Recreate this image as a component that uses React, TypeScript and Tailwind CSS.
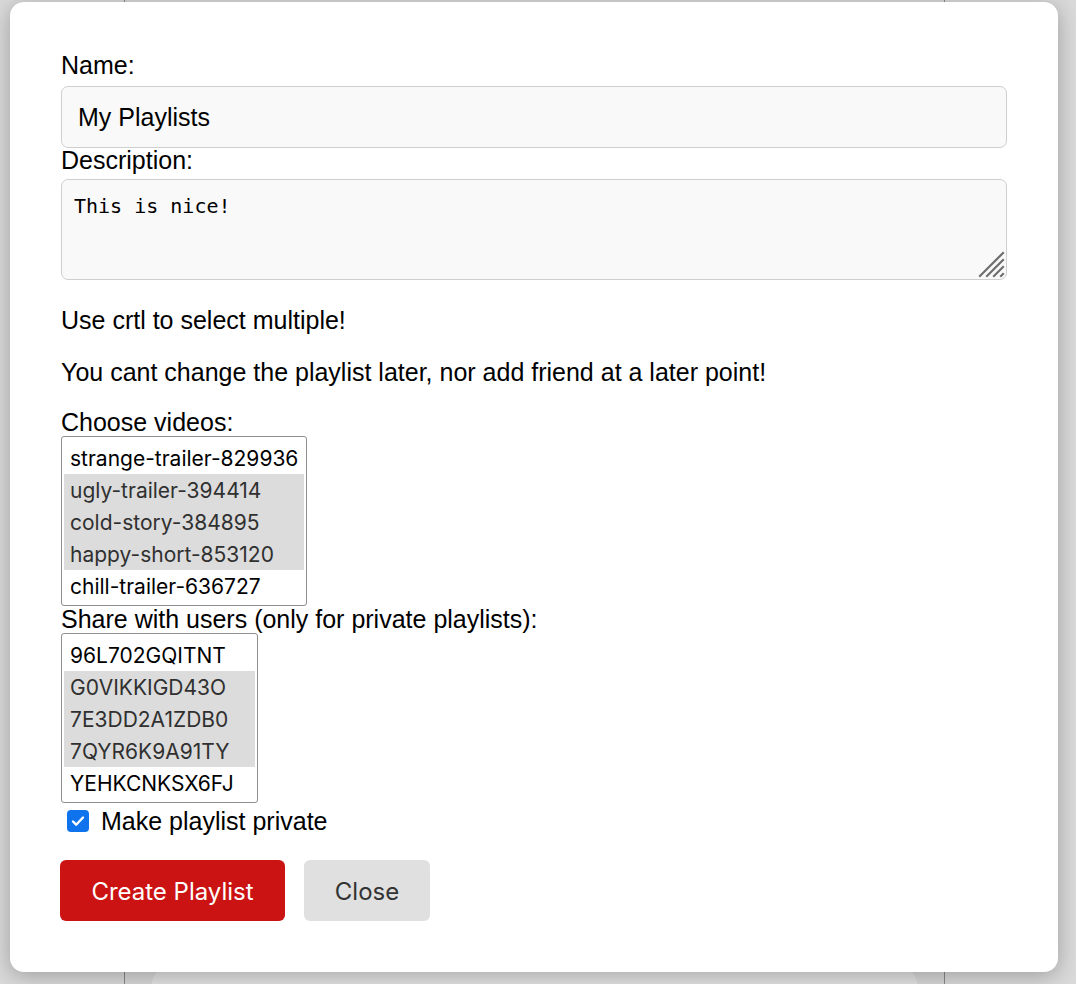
import { useState } from "react";

const videos = [
    "strange-trailer-829936",
    "ugly-trailer-394414",
    "cold-story-384895",
    "happy-short-853120",
    "chill-trailer-636727",
];

const users = ["96L702GQITNT", "G0VIKKIGD43O", "7E3DD2A1ZDB0", "7QYR6K9A91TY", "YEHKCNKSX6FJ"];

const ListBox = ({ items, selected, width }: { items: string[]; selected: number[]; width: string }) => {
    return (
        <div className={`${width} border border-[#8f8f8f] rounded-[3px] bg-white px-[2px] pt-[5px] pb-[3px]`}>
            {items.map((item, i) => (
                <div
                    key={item}
                    className={`h-[32px] flex items-center pl-[6px] pt-[1px] text-[21px] font-['Inter',sans-serif] whitespace-nowrap ${
                        selected.includes(i) ? "bg-[#dcdcdc] text-[#303030]" : "text-black"
                    }`}
                >
                    {item}
                </div>
            ))}
        </div>
    );
};

const App = () => {
    const [isPrivate, setIsPrivate] = useState(true);

    return (
        <div className="relative h-[984px] w-[1076px] overflow-hidden bg-[#dadada] font-['Liberation_Sans',Arial,sans-serif]">
            {/* page behind the overlay */}
            <div className="ml-[124px] w-[821px] h-full border-x border-[#8a8a8a] bg-[#d8d8d8] pt-[958px]">
                <div className="mx-[26px] h-[60px] rounded-t-[32px] bg-[#e3e3e3]" />
            </div>

            {/* modal */}
            <div className="absolute left-[10px] top-[2px] w-[1048px] h-[970px] bg-white rounded-[14px] shadow-[0_4px_22px_rgba(0,0,0,0.28)] pt-[49px] px-[51px]">
                <label className="block text-[25px] leading-[28px] text-black">Name:</label>
                <input
                    className="block mt-[7px] w-[946px] h-[62px] rounded-[7px] border border-[#cfcfcf] bg-[#f9f9f9] px-[16px] text-[25px] text-black outline-none font-['Liberation_Sans',Arial,sans-serif]"
                    defaultValue="My Playlists"
                />
                <label className="block -mt-[2px] text-[25px] leading-[28px] text-black">Description:</label>
                <div className="relative mt-[5px] w-[946px]">
                    <textarea
                        className="block w-full h-[101px] resize-none rounded-[7px] border border-[#cfcfcf] bg-[#f9f9f9] px-[12px] py-[14px] text-[20px] leading-[24px] text-black outline-none font-['DejaVu_Sans_Mono',monospace]"
                        defaultValue="This is nice!"
                    />
                    {/* resize grip */}
                    <svg className="absolute right-[2px] bottom-[2px]" width="27" height="27" viewBox="0 0 27 27">
                        <g stroke="#6e6e6e" strokeWidth="2.2" strokeLinecap="square">
                            <line x1="2" y1="25" x2="25" y2="2" />
                            <line x1="9" y1="25" x2="25" y2="9" />
                            <line x1="16" y1="25" x2="25" y2="16" />
                            <line x1="23" y1="25" x2="25" y2="23" />
                        </g>
                    </svg>
                </div>
                <p className="mt-[26px] text-[25px] leading-[28px] text-black">Use crtl to select multiple!</p>
                <p className="mt-[24px] text-[25px] leading-[28px] text-black">
                    You cant change the playlist later, nor add friend at a later point!
                </p>
                <label className="block mt-[22px] text-[25px] leading-[28px] text-black">Choose videos:</label>
                <ListBox items={videos} selected={[1, 2, 3]} width="w-[246px]" />
                <label className="block -mt-[1px] text-[25px] leading-[28px] text-black">
                    Share with users (only for private playlists):
                </label>
                <ListBox items={users} selected={[1, 2, 3]} width="w-[197px]" />
                <label className="flex items-center mt-[4px] ml-[6px] cursor-pointer" onClick={() => setIsPrivate(!isPrivate)}>
                    <span
                        className={`w-[22px] h-[22px] rounded-[4px] flex items-center justify-center ${
                            isPrivate ? "bg-[#0f73ee]" : "border border-[#767676] bg-white"
                        }`}
                    >
                        {isPrivate && (
                            <svg width="16" height="16" viewBox="0 0 16 16" fill="none">
                                <path d="M3 8.5l3.2 3.2L13 4.5" stroke="white" strokeWidth="2.4" strokeLinecap="round" strokeLinejoin="round" />
                            </svg>
                        )}
                    </span>
                    <span className="ml-[12px] text-[25px] leading-[28px] text-black">Make playlist private</span>
                </label>
                <div className="flex gap-[19px] mt-[25px] -ml-[1px]">
                    <button className="h-[61px] w-[225px] rounded-[6px] bg-[#cc1313] pt-[2px] text-white text-[24px] font-['Inter',sans-serif]">
                        Create Playlist
                    </button>
                    <button className="h-[61px] w-[126px] rounded-[6px] bg-[#e0e0e0] pt-[2px] text-[#333] text-[24px] font-['Inter',sans-serif]">
                        Close
                    </button>
                </div>
            </div>
        </div>
    );
};

export default App;
